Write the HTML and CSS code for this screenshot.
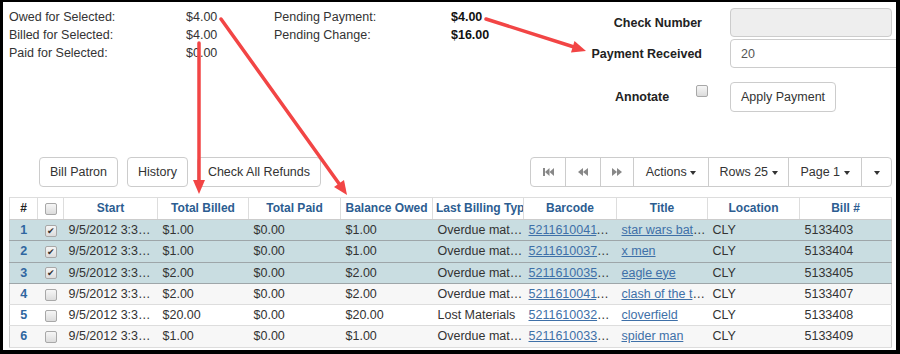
FILE: index.html
```html
<!DOCTYPE html>
<html lang="en">
<head>
    <meta charset="UTF-8">
    <meta name="viewport" content="width=device-width, initial-scale=1.0">
    <title>Patron Bills</title>
    <link rel="stylesheet" href="styles.css">
</head>
<body>
    <div class="frame">
        <div class="top">
            <div class="summary">
                <span>Owed for Selected:</span><span>$4.00</span>
                <span>Billed for Selected:</span><span>$4.00</span>
                <span>Paid for Selected:</span><span>$0.00</span>
            </div>
            <div class="summary pending">
                <span>Pending Payment:</span><b>$4.00</b>
                <span>Pending Change:</span><b>$16.00</b>
            </div>
            <form class="payment">
                <label>Check Number</label>
                <input class="field" type="text" disabled>
                <label>Payment Received</label>
                <input class="field wide" type="text" value="20">
                <div class="annotate">
                    <label>Annotate</label>
                    <input type="checkbox" class="check">
                </div>
                <div class="apply">
                    <button type="button" class="btn">Apply Payment</button>
                </div>
            </form>
        </div>

        <div class="toolbar">
            <div class="actions">
                <button type="button" class="btn">Bill Patron</button>
                <button type="button" class="btn">History</button>
                <button type="button" class="btn">Check All Refunds</button>
            </div>
            <div class="group">
                <button type="button" class="btn icon first">
                    <svg width="11" height="8" viewBox="0 0 11 8"><rect x="0" y="0" width="2" height="8"/><polygon points="6.5,0 2,4 6.5,8"/><polygon points="11,0 6.5,4 11,8"/></svg>
                </button>
                <button type="button" class="btn icon prev">
                    <svg width="10" height="8" viewBox="0 0 10 8"><polygon points="5,0 0,4 5,8"/><polygon points="10,0 5,4 10,8"/></svg>
                </button>
                <button type="button" class="btn icon next">
                    <svg width="10" height="8" viewBox="0 0 10 8"><polygon points="0,0 5,4 0,8"/><polygon points="5,0 10,4 5,8"/></svg>
                </button>
                <button type="button" class="btn menu-actions">Actions <span class="caret"></span></button>
                <button type="button" class="btn menu-rows">Rows 25 <span class="caret"></span></button>
                <button type="button" class="btn menu-page">Page 1 <span class="caret"></span></button>
                <button type="button" class="btn more"><span class="caret"></span></button>
            </div>
        </div>

        <table class="bills">
            <colgroup>
                <col style="width:28px"><col style="width:26px"><col style="width:94px"><col style="width:91px">
                <col style="width:92px"><col style="width:92px"><col style="width:91px"><col style="width:93px">
                <col style="width:91px"><col style="width:92px"><col style="width:92px">
            </colgroup>
            <thead>
                <tr>
                    <th class="hash">#</th>
                    <th><input type="checkbox" class="check"></th>
                    <th>Start</th>
                    <th>Total Billed</th>
                    <th>Total Paid</th>
                    <th>Balance Owed</th>
                    <th>Last Billing Type</th>
                    <th>Barcode</th>
                    <th>Title</th>
                    <th>Location</th>
                    <th>Bill #</th>
                </tr>
            </thead>
            <tbody>
                <tr class="sel">
                    <td class="num">1</td>
                    <td class="box"><input type="checkbox" class="check" checked></td>
                    <td class="date">9/5/2012 3:36 PM</td><td>$1.00</td><td>$0.00</td><td>$1.00</td>
                    <td>Overdue materials</td>
                    <td class="code"><a href="#">52116100411234</a></td>
                    <td><a href="#">star wars battlefront</a></td>
                    <td>CLY</td><td>5133403</td>
                </tr>
                <tr class="sel">
                    <td class="num">2</td>
                    <td class="box"><input type="checkbox" class="check" checked></td>
                    <td class="date">9/5/2012 3:36 PM</td><td>$1.00</td><td>$0.00</td><td>$1.00</td>
                    <td>Overdue materials</td>
                    <td class="code"><a href="#">52116100371234</a></td>
                    <td><a href="#">x men</a></td>
                    <td>CLY</td><td>5133404</td>
                </tr>
                <tr class="sel">
                    <td class="num">3</td>
                    <td class="box"><input type="checkbox" class="check" checked></td>
                    <td class="date">9/5/2012 3:36 PM</td><td>$2.00</td><td>$0.00</td><td>$2.00</td>
                    <td>Overdue materials</td>
                    <td class="code"><a href="#">52116100351234</a></td>
                    <td><a href="#">eagle eye</a></td>
                    <td>CLY</td><td>5133405</td>
                </tr>
                <tr class="alt">
                    <td class="num">4</td>
                    <td class="box"><input type="checkbox" class="check"></td>
                    <td class="date">9/5/2012 3:36 PM</td><td>$2.00</td><td>$0.00</td><td>$2.00</td>
                    <td>Overdue materials</td>
                    <td class="code"><a href="#">52116100411234</a></td>
                    <td><a href="#">clash of the titans</a></td>
                    <td>CLY</td><td>5133407</td>
                </tr>
                <tr>
                    <td class="num">5</td>
                    <td class="box"><input type="checkbox" class="check"></td>
                    <td class="date">9/5/2012 3:36 PM</td><td>$20.00</td><td>$0.00</td><td>$20.00</td>
                    <td>Lost Materials</td>
                    <td class="code"><a href="#">52116100321234</a></td>
                    <td><a href="#">cloverfield</a></td>
                    <td>CLY</td><td>5133408</td>
                </tr>
                <tr class="alt">
                    <td class="num">6</td>
                    <td class="box"><input type="checkbox" class="check"></td>
                    <td class="date">9/5/2012 3:36 PM</td><td>$1.00</td><td>$0.00</td><td>$1.00</td>
                    <td>Overdue materials</td>
                    <td class="code"><a href="#">52116100331234</a></td>
                    <td><a href="#">spider man</a></td>
                    <td>CLY</td><td>5133409</td>
                </tr>
            </tbody>
        </table>
    </div>

    <!-- annotation arrows drawn on top of the screenshot -->
    <svg class="notes" width="900" height="354" viewBox="0 0 900 354">
        <g stroke="#f24545" stroke-width="3.5" stroke-linecap="round" fill="none">
            <line x1="199" y1="43" x2="199" y2="182"/>
            <line x1="221" y1="19" x2="340" y2="185"/>
            <line x1="486" y1="19" x2="574" y2="47"/>
        </g>
        <g fill="#f24545">
            <polygon points="199,194 193,180 205,180"/>
            <polygon points="347,195 334,187 344,180"/>
            <polygon points="586,51 571,52.5 574.5,41"/>
        </g>
    </svg>
</body>
</html>
```

FILE: styles.css
```css
body {
    margin: 0;
    font-family: "Liberation Sans", Arial, sans-serif;
    font-size: 12.5px;
    color: #333;
    background-color: #000;
}

.frame {
    position: relative;
    box-sizing: border-box;
    width: 900px;
    height: 354px;
    overflow: hidden;
    background-color: #fff;
    border-style: solid;
    border-color: #000;
    border-width: 2px 4px 4px 3px;
}

/* summary + payment form */
.top {
    display: flex;
    padding: 6px 0 0 6px;
}

.summary {
    display: grid;
    grid-template-columns: 177px 88px;
    grid-auto-rows: 18px;
    line-height: 18px;
    align-content: start;
}

.summary.pending {
    grid-template-columns: 177px 129px;
}

.summary b {
    color: #111;
}

.payment {
    display: grid;
    grid-template-columns: 122px 180px;
    column-gap: 28px;
    row-gap: 2px;
    align-items: center;
}

.payment label {
    font-weight: bold;
    color: #222;
    text-align: right;
}

.field {
    box-sizing: border-box;
    width: 162px;
    height: 29px;
    padding: 0 10px;
    border: 1px solid #ccc;
    border-radius: 4px;
    font-family: inherit;
    font-size: 12.5px;
    color: #555;
    background-color: #fff;
}

.field:disabled {
    background-color: #eee;
}

.field.wide {
    width: 180px;
}

.annotate {
    display: flex;
    align-self: stretch;
    align-items: center;
    margin-top: 12px;
    padding-left: 35px;
}

.annotate .check {
    align-self: flex-start;
    margin: 3px 0 0 27px;
}

.apply {
    margin-top: 12px;
}

/* buttons */
.btn {
    box-sizing: border-box;
    height: 30px;
    padding: 0 10px;
    border: 1px solid #ccc;
    border-radius: 4px;
    background-color: #fff;
    font-family: inherit;
    font-size: 12.5px;
    color: #333;
    cursor: pointer;
}

.toolbar {
    display: flex;
    justify-content: space-between;
    margin: 45px 4px 0 36px;
}

.actions {
    display: flex;
    gap: 9px;
}

.group {
    display: flex;
}

.group .btn {
    border-radius: 0;
    margin-left: -1px;
    padding: 0;
}

.group .btn:first-child {
    margin-left: 0;
    border-radius: 4px 0 0 4px;
}

.group .btn:last-child {
    border-radius: 0 4px 4px 0;
}

.group .icon {
    fill: #888;
}

.group .first { width: 36px; }
.group .prev { width: 36px; }
.group .next { width: 34px; }
.group .menu-actions { width: 76px; }
.group .menu-rows { width: 81px; }
.group .menu-page { width: 74px; }
.group .more { width: 31px; }

.caret {
    display: inline-block;
    width: 0;
    height: 0;
    vertical-align: middle;
    border-top: 4px solid #333;
    border-left: 3.5px solid transparent;
    border-right: 3.5px solid transparent;
}

/* checkboxes */
.check {
    appearance: none;
    box-sizing: border-box;
    flex-shrink: 0;
    width: 12px;
    height: 12px;
    margin: 0;
    border: 1px solid #a8a8a8;
    border-radius: 2px;
    background: linear-gradient(#f6f6f6, #dcdcdc);
    vertical-align: middle;
    position: relative;
}

.check:checked::after {
    content: "\2714";
    position: absolute;
    left: 1px;
    top: -2px;
    font-size: 9px;
    line-height: 14px;
    color: #333;
}

/* bills table */
.bills {
    width: 882px;
    margin: 10px 0 0 6px;
    table-layout: fixed;
    border-collapse: collapse;
    border: 1px solid #ccc;
}

.bills th {
    padding: 0 3px;
    line-height: 21px;
    font-size: 12px;
    font-weight: bold;
    color: #2c5d91;
    text-align: center;
    white-space: nowrap;
    overflow: hidden;
    border: 1px solid #ddd;
    border-bottom-color: #ccc;
}

.bills th.hash {
    color: #222;
}

.bills td {
    padding: 0 0 0 5px;
    line-height: 20.3px;
    white-space: nowrap;
    overflow: hidden;
    text-overflow: ellipsis;
    border-bottom: 1px solid #ddd;
}

.bills td.date,
.bills td.code {
    padding-right: 6px;
}

.bills td.num {
    padding: 0;
    text-align: center;
    font-weight: bold;
    color: #2f66a0;
}

.bills td.box {
    padding: 0;
    text-align: center;
}

.bills a {
    color: #3e70a8;
}

.bills tr.sel td {
    background-color: #c9dde1;
    border-bottom-color: #9ea6a9;
}

.bills tr.alt td {
    background-color: #f7f7f7;
}

.notes {
    position: absolute;
    top: 0;
    left: 0;
    pointer-events: none;
}
```
